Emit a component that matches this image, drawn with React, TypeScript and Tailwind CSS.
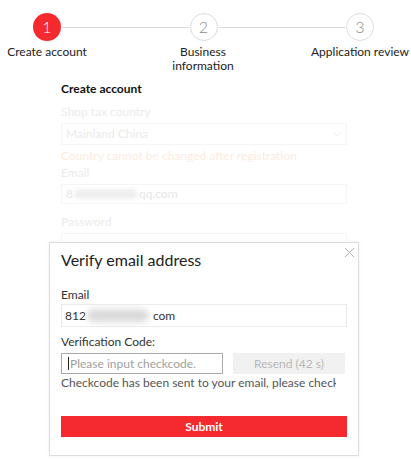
export default function App() {
  const steps = ["Create account", "Business information", "Application review"];

  return (
    <div className="relative h-[460px] w-[411px] overflow-hidden bg-white font-['Lato','Liberation_Sans',sans-serif] text-[12px] leading-[14px]">
      {/* stepper */}
      <div className="flex items-center pl-[33px] pr-[37px] pt-[13px]">
        <div className="flex h-[28px] w-[28px] items-center justify-center rounded-full bg-[#f42a2f] text-[16px] font-light text-white">
          1
        </div>
        <div className="mx-[1px] h-px flex-1 bg-[#d9d9d9]" />
        <div className="flex h-[28px] w-[28px] items-center justify-center rounded-full border border-[#dcdcdc] text-[16px] font-light text-[#8a8a8a]">
          2
        </div>
        <div className="mx-[1px] h-px flex-1 bg-[#d9d9d9]" />
        <div className="flex h-[28px] w-[28px] items-center justify-center rounded-full border border-[#dcdcdc] text-[16px] font-light text-[#8a8a8a]">
          3
        </div>
      </div>
      <div className="mt-[4px] flex text-[#222]">
        <div className="ml-[-3px] w-[100px] text-center">{steps[0]}</div>
        <div className="ml-[56px] w-[100px] text-center">
          Business
          <br />
          information
        </div>
        <div className="ml-[57px] w-[100px] text-center">{steps[2]}</div>
      </div>

      {/* faded form behind the dialog */}
      <div className="ml-[61px] mt-[9px] w-[286px]">
        <div className="font-bold text-[#111]">Create account</div>
        <div className="mt-[9px] text-[#ebebeb]">Shop tax country</div>
        <div className="mt-[4px] flex h-[22px] items-center justify-between border border-[#f5f5f5] px-[4px] text-[#ebebeb]">
          <span>Mainland China</span>
          <svg width="10" height="6" viewBox="0 0 10 6" fill="none" stroke="#efefef" strokeWidth="1">
            <path d="M1 1l4 4 4-4" />
          </svg>
        </div>
        <div className="mt-[4px] text-[#fdebe1]">Country cannot be changed after registration</div>
        <div className="mt-[3px] text-[#ebebeb]">Email</div>
        <div className="mt-[4px] flex h-[20px] items-center border border-[#f5f5f5] px-[4px] text-[#e6e6e6]">
          <span>8</span>
          <span className="mx-[1px] h-[10px] w-[64px] rounded-full bg-[#efefef] blur-[2px]" />
          <span>qq.com</span>
        </div>
        <div className="mt-[11px] text-[#ebebeb]">Password</div>
        <div className="mt-[4px] h-[22px] border border-[#f5f5f5]" />
      </div>

      {/* dialog */}
      <div className="absolute left-[49px] top-[242px] h-[214px] w-[310px] border border-[#dcdcdc] bg-white pl-[11px] pt-[7px] shadow-[0_0_4px_rgba(0,0,0,0.06)]">
        <svg
          className="absolute left-[294px] top-[4px]"
          width="11"
          height="11"
          viewBox="0 0 11 11"
          stroke="#b5b5b5"
          strokeWidth="1"
        >
          <path d="M1 1l9 9M10 1l-9 9" />
        </svg>
        <div className="text-[16px] leading-[20px] text-[#222]">Verify email address</div>

        <div className="mt-[18px] w-[286px] text-[#333]">Email</div>
        <div className="mt-[2px] flex h-[23px] w-[286px] items-center border border-[#ececec] px-[3px] text-[#333]">
          <span>812</span>
          <span className="ml-[1px] h-[13px] w-[62px] rounded-full bg-[#dadada] blur-[3px]" />
          <span className="ml-[4px]">com</span>
        </div>

        <div className="mt-[8px] text-[#333]">Verification Code:</div>
        <div className="mt-[4px] flex h-[21px] w-[286px] gap-[10px]">
          <div className="flex w-[162px] items-center border border-[#a9a9a9] pl-[6px] text-[#a0a0a0]">
            <span className="mr-[1px] h-[13px] w-px bg-[#222]" />
            Please input checkcode.
          </div>
          <div className="flex w-[112px] items-center justify-center bg-[#f1f1f1] text-[#b8b8b8]">
            Resend (42 s)
          </div>
        </div>
        <div className="mt-[2px] w-[275px] overflow-hidden whitespace-nowrap text-[#555]">
          Checkcode has been sent to your email, please check
        </div>

        <div className="mt-[26px] flex h-[21px] w-[286px] items-center justify-center bg-[#f42a2f] font-bold text-white">
          Submit
        </div>
      </div>
    </div>
  );
}
